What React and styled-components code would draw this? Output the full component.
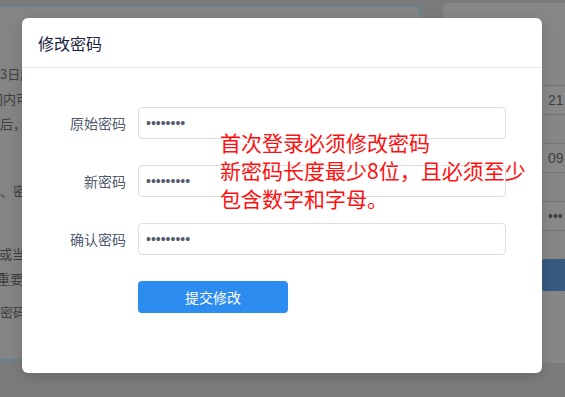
import React from "react";
import styled, { createGlobalStyle } from "styled-components";

const GlobalStyle = createGlobalStyle`
  html, body { margin: 0; padding: 0; }
  body {
    font-family: "Liberation Sans", "Noto Sans CJK SC", sans-serif;
    background: #7b7b7b;
  }
  * { box-sizing: border-box; }
`;

const Page = styled.div`
  position: relative;
  width: 565px;
  height: 397px;
  overflow: hidden;
  background: #7b7b7b;
  display: flex;
  align-items: flex-start;
  padding-top: 3px;
`;

const LeftPanel = styled.div`
  width: 422px;
  height: 358px;
  margin-top: 1px;
  flex-shrink: 0;
  background: #848484;
  border: 3px solid #6f7f88;
  border-left: none;
  border-radius: 0 5px 5px 0;
  padding-top: 54px;
  overflow: hidden;
`;

const BgLine = styled.div`
  height: 25px;
  line-height: 25px;
  font-size: 13px;
  color: #3e3e3e;
  white-space: nowrap;
  font-family: "Noto Sans CJK SC", sans-serif;
  margin-top: ${(p) => p.$mt || 0}px;
  text-indent: ${(p) => p.$indent || 0}px;
`;

const RightPanel = styled.div`
  flex: 1;
  margin-left: 21px;
  height: 360px;
  background: #868686;
  border-radius: 5px 0 0 5px;
  padding: 82px 0 0 98px;
  display: flex;
  flex-direction: column;
  gap: 28px;
`;

const BgInput = styled.div`
  height: 30px;
  border: 1px solid #767676;
  border-right: none;
  border-radius: 4px 0 0 4px;
  background: #888;
  color: #404040;
  font-size: 14px;
  line-height: 28px;
  padding-left: 6px;
`;

const BgButton = styled.div`
  height: 32px;
  border-radius: 4px 0 0 4px;
  background: #385a80;
`;

const Mask = styled.div`
  position: absolute;
  inset: 0;
  display: flex;
  justify-content: flex-start;
  align-items: flex-start;
  padding: 18px 0 0 22px;
`;

const Modal = styled.div`
  width: 520px;
  background: #fff;
  border-radius: 6px;
  box-shadow: 0 4px 12px rgba(0, 0, 0, 0.15);
`;

const Header = styled.div`
  height: 50px;
  border-bottom: 1px solid #e8eaec;
  display: flex;
  align-items: center;
  padding: 0 16px;
`;

const Title = styled.div`
  font-size: 16px;
  color: #17233d;
  font-family: "Noto Sans CJK SC", sans-serif;
`;

const Body = styled.div`
  padding: 39px 16px 60px;
  display: flex;
  flex-direction: column;
  gap: 26px;
`;

const Row = styled.div`
  display: flex;
  align-items: center;
`;

const Label = styled.label`
  width: 100px;
  padding-right: 12px;
  text-align: right;
  font-size: 14px;
  color: #515a6e;
  font-family: "Noto Sans CJK SC", sans-serif;
`;

const Input = styled.input`
  width: 368px;
  height: 32px;
  border: 1px solid #dcdee2;
  border-radius: 4px;
  padding: 0 7px;
  font-family: "Liberation Sans", sans-serif;
  font-size: 14px;
  color: #515a6e;
  outline: none;
  background: #fff;
`;

const Spacer = styled.div`
  width: 100px;
`;

const Button = styled.button`
  width: 150px;
  height: 32px;
  border: none;
  border-radius: 4px;
  background: #2d8cf0;
  color: #fff;
  font-size: 14px;
  font-family: "Noto Sans CJK SC", sans-serif;
  cursor: pointer;
`;

const Note = styled.div`
  position: absolute;
  left: 220px;
  top: 128px;
  font-size: 21px;
  line-height: 28px;
  color: #ff1010;
  font-family: "Noto Sans CJK SC", sans-serif;
  white-space: nowrap;
`;

const fields = [
  { label: "原始密码", value: "12345678" },
  { label: "新密码", value: "123456789" },
  { label: "确认密码", value: "123456789" },
];

export default function App() {
  return (
    <>
      <GlobalStyle />
      <Page>
        <LeftPanel>
          <BgLine>3日起，系统将启用新的登录方式</BgLine>
          <BgLine $indent={-10}>间内可使用原有账号登录系统</BgLine>
          <BgLine>后，系统将自动提示修改密码</BgLine>
          <BgLine $mt={42}>、密码长度不少于8位</BgLine>
          <BgLine $mt={38} $indent={-1}>或当前密码已泄露，请及时修改</BgLine>
          <BgLine $indent={-3}>重要信息请妥善保管</BgLine>
          <BgLine $mt={8}>密码修改后请重新登录</BgLine>
        </LeftPanel>
        <RightPanel>
          <BgInput>21</BgInput>
          <BgInput>09</BgInput>
          <BgInput>•••</BgInput>
          <BgButton />
        </RightPanel>
        <Mask>
          <Modal>
            <Header>
              <Title>修改密码</Title>
            </Header>
            <Body>
              {fields.map((f) => (
                <Row key={f.label}>
                  <Label>{f.label}</Label>
                  <Input type="password" defaultValue={f.value} readOnly />
                </Row>
              ))}
              <Row>
                <Spacer />
                <Button>提交修改</Button>
              </Row>
            </Body>
          </Modal>
        </Mask>
        <Note>
          首次登录必须修改密码
          <br />
          新密码长度最少8位，且必须至少
          <br />
          包含数字和字母。
        </Note>
      </Page>
    </>
  );
}
